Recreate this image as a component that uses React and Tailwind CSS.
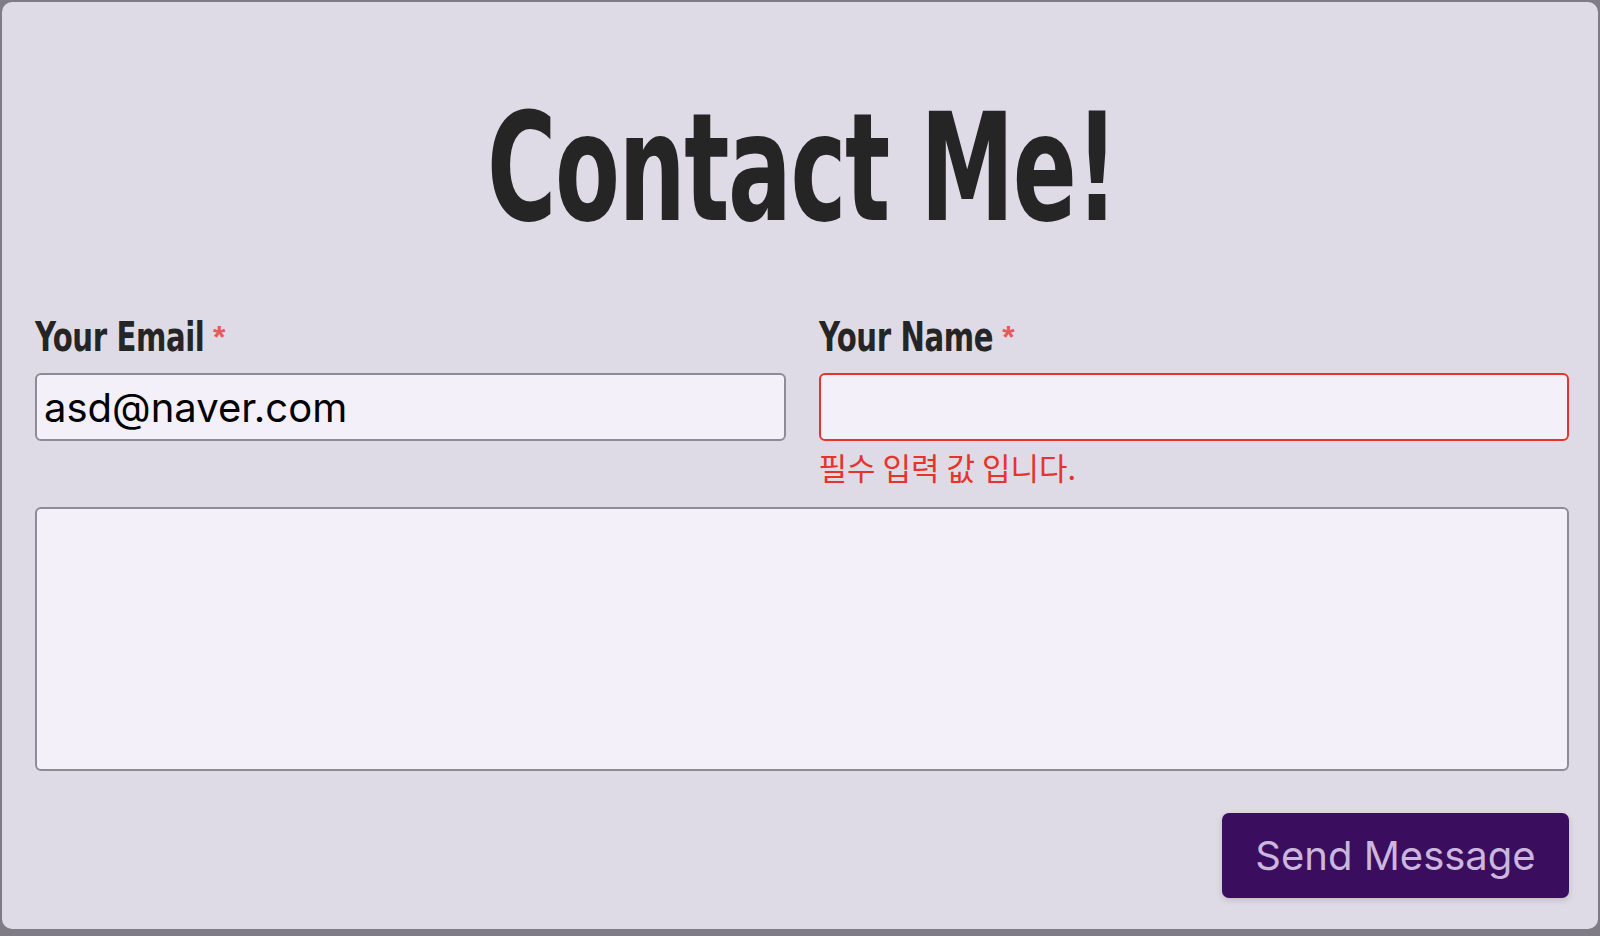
export default function App() {
    return (
        <div className="h-[936px] w-[1600px] bg-[#7f7c86] px-[2px] pt-[2px] pb-[7px]">
            <div className="h-full rounded-[10px] bg-[#dfdbe6] px-[33px] pr-[29px]">
                <div className="flex h-[305px] items-start justify-center pt-[91px]">
                    <h1 className="inline-block origin-center scale-x-[0.70] text-[150px] leading-none font-bold tracking-[-2px] text-[#252525] [font-family:'Liberation_Sans_Narrow','DejaVu_Sans_Condensed',sans-serif]">
                        Contact Me!
                    </h1>
                </div>

                <form className="flex flex-col">
                    <div className="grid grid-cols-2 gap-x-[33px]">
                        <div className="flex flex-col">
                            <label className="flex h-[60px] items-end pb-[10px] text-[#252525]">
                                <span className="inline-block origin-left scale-x-[0.81] text-[40px] leading-none font-bold tracking-[-0.5px] [font-family:'Liberation_Sans_Narrow','DejaVu_Sans_Condensed',sans-serif]">Your Email</span>
                                <span className="ml-[-31px] self-start pt-[14px] text-[32px] leading-none font-bold text-[#e85a5a] [font-family:'Liberation_Sans',sans-serif]">*</span>
                            </label>
                            <input
                                type="email"
                                defaultValue="asd@naver.com"
                                className="mt-[6px] h-[68px] rounded-[6px] border-2 border-[#8f8b95] bg-[#f3f0f9] px-[7px] text-[40px] text-black outline-none [font-family:Inter,sans-serif]"
                            />
                        </div>
                        <div className="flex flex-col">
                            <label className="flex h-[60px] items-end pb-[10px] text-[#252525]">
                                <span className="inline-block origin-left scale-x-[0.81] text-[40px] leading-none font-bold tracking-[-0.5px] [font-family:'Liberation_Sans_Narrow','DejaVu_Sans_Condensed',sans-serif]">Your Name</span>
                                <span className="ml-[-31px] self-start pt-[14px] text-[32px] leading-none font-bold text-[#e85a5a] [font-family:'Liberation_Sans',sans-serif]">*</span>
                            </label>
                            <input
                                type="text"
                                className="mt-[6px] h-[68px] rounded-[6px] border-2 border-[#e8332a] bg-[#f3f0f9] px-[7px] text-[40px] text-black outline-none [font-family:Inter,sans-serif]"
                            />
                            <p className="mt-[6px] text-[31px] leading-[40px] text-[#e8332a] [font-family:'Noto_Sans_CJK_KR',sans-serif]">필수 입력 값 입니다.</p>
                        </div>
                    </div>

                    <textarea className="mt-[20px] h-[264px] resize-none rounded-[6px] border-2 border-[#8f8b95] bg-[#f3f0f9] p-3 text-[40px] outline-none [font-family:Inter,sans-serif]" />

                    <div className="mt-[42px] flex justify-end">
                        <button
                            type="button"
                            className="h-[85px] w-[347px] rounded-[7px] bg-[#3a0d5e] text-[40px] text-[#cbb6de] shadow-[0_2px_6px_rgba(0,0,0,0.15)] [font-family:Inter,sans-serif]"
                        >
                            Send Message
                        </button>
                    </div>
                </form>
            </div>
        </div>
    );
}
